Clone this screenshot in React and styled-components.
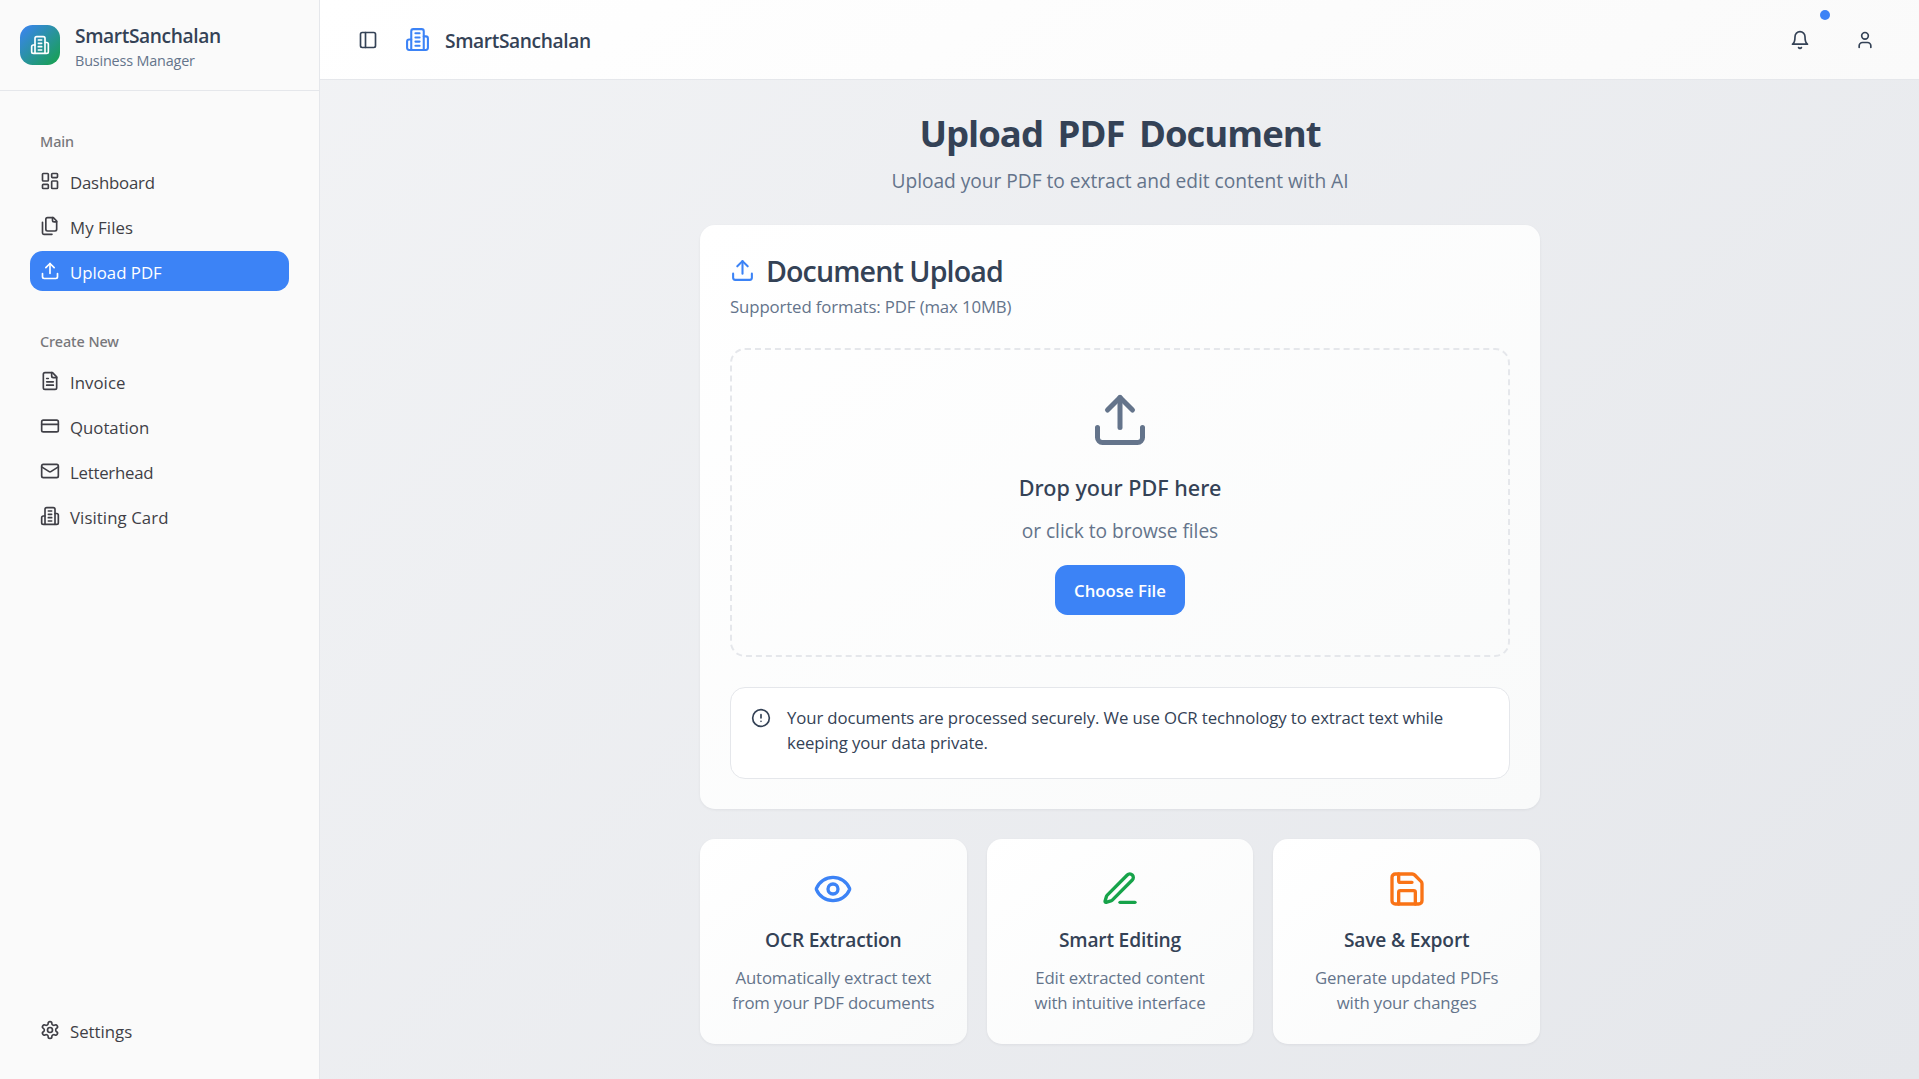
import React from 'react';
import styled, { createGlobalStyle } from 'styled-components';

const GlobalStyle = createGlobalStyle`
  *, *::before, *::after { box-sizing: border-box; }
  body {
    margin: 0;
    font-family: "Open Sans", "Noto Sans", sans-serif;
    color: #344256;
    overflow: hidden;
  }
  h1, h2, h3, p { margin: 0; }
  button { border: 0; padding: 0; background: none; font: inherit; color: inherit; cursor: pointer; }
`;

/* ---------- icons ---------- */

const Svg = styled.svg`
  display: block;
  flex: none;
  width: ${({ $size }) => $size}px;
  height: ${({ $size }) => $size}px;
  color: ${({ $color }) => $color || 'inherit'};
  fill: none;
  stroke: currentColor;
  stroke-width: 2;
  stroke-linecap: round;
  stroke-linejoin: round;
`;

const shapes = {
  building: (
    <>
      <path d="M6 22V4a2 2 0 0 1 2-2h8a2 2 0 0 1 2 2v18Z" />
      <path d="M6 12H4a2 2 0 0 0-2 2v6a2 2 0 0 0 2 2h2" />
      <path d="M18 9h2a2 2 0 0 1 2 2v9a2 2 0 0 1-2 2h-2" />
      <path d="M10 6h4M10 10h4M10 14h4M10 18h4" />
    </>
  ),
  dashboard: (
    <>
      <rect width="7" height="9" x="3" y="3" rx="1" />
      <rect width="7" height="5" x="14" y="3" rx="1" />
      <rect width="7" height="9" x="14" y="12" rx="1" />
      <rect width="7" height="5" x="3" y="16" rx="1" />
    </>
  ),
  files: (
    <>
      <path d="M20 7h-3a2 2 0 0 1-2-2V2" />
      <path d="M9 18a2 2 0 0 1-2-2V4a2 2 0 0 1 2-2h7l4 4v10a2 2 0 0 1-2 2Z" />
      <path d="M3 7.6v12.8A1.6 1.6 0 0 0 4.6 22h9.8" />
    </>
  ),
  upload: (
    <>
      <path d="M21 15v4a2 2 0 0 1-2 2H5a2 2 0 0 1-2-2v-4" />
      <path d="m17 8-5-5-5 5" />
      <path d="M12 3v12" />
    </>
  ),
  fileText: (
    <>
      <path d="M15 2H6a2 2 0 0 0-2 2v16a2 2 0 0 0 2 2h12a2 2 0 0 0 2-2V7Z" />
      <path d="M14 2v4a2 2 0 0 0 2 2h4" />
      <path d="M10 9H8M16 13H8M16 17H8" />
    </>
  ),
  card: (
    <>
      <rect width="20" height="14" x="2" y="5" rx="2" />
      <path d="M2 10h20" />
    </>
  ),
  mail: (
    <>
      <rect width="20" height="16" x="2" y="4" rx="2" />
      <path d="m22 7-8.97 5.7a1.94 1.94 0 0 1-2.06 0L2 7" />
    </>
  ),
  settings: (
    <>
      <path d="M12.22 2h-.44a2 2 0 0 0-2 2v.18a2 2 0 0 1-1 1.73l-.43.25a2 2 0 0 1-2 0l-.15-.08a2 2 0 0 0-2.73.73l-.22.38a2 2 0 0 0 .73 2.73l.15.1a2 2 0 0 1 1 1.72v.51a2 2 0 0 1-1 1.74l-.15.09a2 2 0 0 0-.73 2.73l.22.38a2 2 0 0 0 2.73.73l.15-.08a2 2 0 0 1 2 0l.43.25a2 2 0 0 1 1 1.73V20a2 2 0 0 0 2 2h.44a2 2 0 0 0 2-2v-.18a2 2 0 0 1 1-1.73l.43-.25a2 2 0 0 1 2 0l.15.08a2 2 0 0 0 2.73-.73l.22-.39a2 2 0 0 0-.73-2.73l-.15-.08a2 2 0 0 1-1-1.74v-.5a2 2 0 0 1 1-1.74l.15-.09a2 2 0 0 0 .73-2.73l-.22-.38a2 2 0 0 0-2.73-.73l-.15.08a2 2 0 0 1-2 0l-.43-.25a2 2 0 0 1-1-1.73V4a2 2 0 0 0-2-2z" />
      <circle cx="12" cy="12" r="3" />
    </>
  ),
  panel: (
    <>
      <rect width="18" height="18" x="3" y="3" rx="2" />
      <path d="M9 3v18" />
    </>
  ),
  bell: (
    <>
      <path d="M6 8a6 6 0 0 1 12 0c0 7 3 9 3 9H3s3-2 3-9" />
      <path d="M10.3 21a1.94 1.94 0 0 0 3.4 0" />
    </>
  ),
  user: (
    <>
      <path d="M19 21v-2a4 4 0 0 0-4-4H9a4 4 0 0 0-4 4v2" />
      <circle cx="12" cy="7" r="4" />
    </>
  ),
  alert: (
    <>
      <circle cx="12" cy="12" r="10" />
      <path d="M12 8v4M12 16h.01" />
    </>
  ),
  eye: (
    <>
      <path d="M2.062 12.348a1 1 0 0 1 0-.696 10.75 10.75 0 0 1 19.876 0 1 1 0 0 1 0 .696 10.75 10.75 0 0 1-19.876 0" />
      <circle cx="12" cy="12" r="3" />
    </>
  ),
  pen: (
    <>
      <path d="M12 20h9" />
      <path d="M16.376 3.622a1 1 0 0 1 3.002 3.002L7.368 18.635a2 2 0 0 1-.855.506l-2.872.838a.5.5 0 0 1-.62-.62l.838-2.872a2 2 0 0 1 .506-.854z" />
    </>
  ),
  save: (
    <>
      <path d="M15.2 3a2 2 0 0 1 1.4.6l3.8 3.8a2 2 0 0 1 .6 1.4V19a2 2 0 0 1-2 2H5a2 2 0 0 1-2-2V5a2 2 0 0 1 2-2z" />
      <path d="M17 21v-7a1 1 0 0 0-1-1H8a1 1 0 0 0-1 1v7" />
      <path d="M7 3v4a1 1 0 0 0 1 1h7" />
    </>
  ),
};

const Icon = ({ name, size = 20, color }) => (
  <Svg viewBox="0 0 24 24" $size={size} $color={color} aria-hidden="true">
    {shapes[name]}
  </Svg>
);

/* ---------- shell ---------- */

const Shell = styled.div`
  display: flex;
  height: 1079px;
  background: linear-gradient(135deg, #f3f4f6, #e5e7eb);
`;

const Sidebar = styled.aside`
  display: flex;
  flex-direction: column;
  flex: none;
  width: 320px;
  background: #fafafa;
  border-right: 1px solid #e5e7eb;
`;

const Brand = styled.div`
  display: flex;
  align-items: center;
  gap: 15px;
  height: 91px;
  padding: 0 20px;
  border-bottom: 1px solid #e5e7eb;
`;

const BrandMark = styled.div`
  display: grid;
  place-items: center;
  width: 40px;
  height: 40px;
  border-radius: 12.5px;
  color: #fff;
  background: linear-gradient(135deg, #3c83f6, #16a249);
`;

const BrandText = styled.div`
  padding-top: 2px;
`;

const BrandName = styled.div`
  font-size: 19.2px;
  font-weight: 600;
  line-height: 30px;
  letter-spacing: -0.39px;
`;

const BrandTag = styled.div`
  font-size: 14.4px;
  line-height: 20px;
  letter-spacing: -0.17px;
  color: #64748b;
`;

const Nav = styled.nav`
  display: flex;
  flex-direction: column;
  gap: 30px;
  flex: 1;
  padding: 30px 30px 0;
`;

const NavGroup = styled.div`
  display: flex;
  flex-direction: column;
`;

const NavLabel = styled.div`
  padding: 2px 10px 0;
  font-family: "Noto Sans", sans-serif;
  font-size: 14.4px;
  font-weight: 500;
  line-height: 38px;
  letter-spacing: -0.08px;
  color: #77777b;
`;

const NavList = styled.div`
  display: flex;
  flex-direction: column;
  gap: 5px;
`;

const NavItem = styled.a`
  display: flex;
  align-items: center;
  gap: 10px;
  height: 40px;
  padding: 0 10px;
  border-radius: 12.5px;
  color: ${({ $active }) => ($active ? '#fff' : '#3f3f46')};
  background: ${({ $active }) => ($active ? '#3c83f6' : 'transparent')};
`;

const NavText = styled.span`
  padding-top: 2px;
  font-size: 16.8px;
  line-height: 25px;
  letter-spacing: ${({ $track = 0 }) => $track}px;
`;

const SidebarFooter = styled.div`
  padding: 0 30px 29px;
`;

const Page = styled.div`
  display: flex;
  flex-direction: column;
  flex: 1;
`;

const TopBar = styled.header`
  display: flex;
  align-items: center;
  justify-content: space-between;
  flex: none;
  height: 80px;
  padding: 0 29px 0 30px;
  border-bottom: 1px solid #e5e7eb;
  background: linear-gradient(145deg, #fff, #fafafa);
`;

const TopGroup = styled.div`
  display: flex;
  align-items: center;
  gap: ${({ $gap }) => $gap}px;
`;

const IconButton = styled.button`
  position: relative;
  display: grid;
  place-items: center;
  width: ${({ $width = 50 }) => $width}px;
  height: 50px;
`;

const NotificationDot = styled.span`
  position: absolute;
  top: -5px;
  right: -5px;
  width: 10px;
  height: 10px;
  border-radius: 50%;
  background: #3c83f6;
`;

const TopTitle = styled(BrandName)`
  padding-top: 3px;
  margin-left: -5px;
`;

/* ---------- content ---------- */

const Content = styled.main`
  display: flex;
  flex-direction: column;
  gap: 30px;
  width: 840px;
  margin-left: 380px;
  padding-top: 31px;
`;

const Intro = styled.div`
  display: flex;
  flex-direction: column;
  gap: 10px;
  height: 84px;
  text-align: center;
`;

const PageTitle = styled.h1`
  font-size: 36.5px;
  font-weight: 700;
  line-height: 45px;
  letter-spacing: -1px;
  word-spacing: 6px;
`;

const Lead = styled.p`
  font-size: 19.2px;
  line-height: 30px;
  letter-spacing: -0.04px;
  color: #64748b;
`;

const Surface = styled.section`
  border-radius: 15px;
  background: linear-gradient(145deg, #fff, #f9fafa);
  box-shadow: 0 1px 3px rgba(15, 23, 42, 0.06);
`;

const UploadCard = styled(Surface)`
  height: 584px;
  padding: 30px;
`;

const CardTitle = styled.h2`
  display: flex;
  align-items: center;
  gap: 11px;
  height: 30px;
  font-size: 28.6px;
  font-weight: 600;
  line-height: 30px;
  letter-spacing: -0.9px;
`;

const CardTitleText = styled.span`
  padding-top: 2px;
`;

const CardHint = styled.p`
  margin: 9px 0 29px;
  font-size: 16.8px;
  line-height: 25px;
  letter-spacing: -0.125px;
  color: #64748b;
`;

const DropZone = styled.div`
  display: flex;
  flex-direction: column;
  align-items: center;
  height: 309px;
  padding: 40px;
  border: 2px dashed #e5e7eb;
  border-radius: 15px;
`;

const DropTitle = styled.h3`
  margin: 20px 0 11px;
  font-family: "Noto Sans", sans-serif;
  font-size: 21.6px;
  font-weight: 500;
  line-height: 35px;
`;

const DropHint = styled.p`
  margin-bottom: 19px;
  font-size: 19.2px;
  line-height: 30px;
  letter-spacing: -0.06px;
  color: #64748b;
`;

const PrimaryButton = styled.button`
  width: 130px;
  height: 50px;
  border-radius: 12.5px;
  background: #3c83f6;
  color: #fff;
  font-size: 16.8px;
  font-weight: 600;
`;

const Notice = styled.div`
  display: flex;
  gap: 16px;
  height: 92px;
  margin-top: 30px;
  padding: 17px 19px 15px 20px;
  border: 1px solid #e5e7eb;
  border-radius: 15px;
  background: #fff;
`;

const NoticeIcon = styled.div`
  padding-top: 3px;
`;

const NoticeText = styled.p`
  width: 670px;
  font-size: 16.8px;
  line-height: 25px;
  letter-spacing: -0.125px;
`;

const Features = styled.div`
  display: grid;
  grid-template-columns: repeat(3, 1fr);
  gap: 20px;
`;

const FeatureCard = styled(Surface)`
  display: flex;
  flex-direction: column;
  align-items: center;
  height: 205px;
  padding: 30px;
  text-align: center;
`;

const FeatureTitle = styled.h3`
  margin: 16px 0 10px;
  font-size: 19.2px;
  font-weight: 600;
  line-height: 30px;
  letter-spacing: -0.19px;
`;

const FeatureText = styled.p`
  font-size: 16.8px;
  line-height: 25px;
  letter-spacing: -0.15px;
  color: #64748b;
  white-space: pre-line;
`;

const groups = [
  {
    label: 'Main',
    items: [
      { icon: 'dashboard', text: 'Dashboard', track: -0.2 },
      { icon: 'files', text: 'My Files', track: 0.08 },
      { icon: 'upload', text: 'Upload PDF', active: true },
    ],
  },
  {
    label: 'Create New',
    items: [
      { icon: 'fileText', text: 'Invoice', track: 0.04 },
      { icon: 'card', text: 'Quotation', track: -0.02 },
      { icon: 'mail', text: 'Letterhead', track: -0.24 },
      { icon: 'building', text: 'Visiting Card', track: 0.08 },
    ],
  },
];

const features = [
  { icon: 'eye', color: '#3c83f6', title: 'OCR Extraction', text: 'Automatically extract text\nfrom your PDF documents' },
  { icon: 'pen', color: '#16a34a', title: 'Smart Editing', text: 'Edit extracted content\nwith intuitive interface' },
  { icon: 'save', color: '#f97316', title: 'Save & Export', text: 'Generate updated PDFs\nwith your changes' },
];

const NavLink = ({ icon, text, track, active }) => (
  <NavItem $active={active}>
    <Icon name={icon} />
    <NavText $track={track}>{text}</NavText>
  </NavItem>
);

export default function App() {
  return (
    <>
      <GlobalStyle />
      <Shell>
        <Sidebar>
          <Brand>
            <BrandMark>
              <Icon name="building" />
            </BrandMark>
            <BrandText>
              <BrandName>SmartSanchalan</BrandName>
              <BrandTag>Business Manager</BrandTag>
            </BrandText>
          </Brand>
          <Nav>
            {groups.map((group) => (
              <NavGroup key={group.label}>
                <NavLabel>{group.label}</NavLabel>
                <NavList>
                  {group.items.map((item) => (
                    <NavLink key={item.text} {...item} />
                  ))}
                </NavList>
              </NavGroup>
            ))}
          </Nav>
          <SidebarFooter>
            <NavLink icon="settings" text="Settings" />
          </SidebarFooter>
        </Sidebar>

        <Page>
          <TopBar>
            <TopGroup $gap={20}>
              <IconButton $width={35} aria-label="Toggle sidebar">
                <Icon name="panel" />
              </IconButton>
              <Icon name="building" size={25} color="#3c83f6" />
              <TopTitle>SmartSanchalan</TopTitle>
            </TopGroup>
            <TopGroup $gap={15}>
              <IconButton aria-label="Notifications">
                <Icon name="bell" />
                <NotificationDot />
              </IconButton>
              <IconButton aria-label="Account">
                <Icon name="user" />
              </IconButton>
            </TopGroup>
          </TopBar>

          <Content>
            <Intro>
              <PageTitle>Upload PDF Document</PageTitle>
              <Lead>Upload your PDF to extract and edit content with AI</Lead>
            </Intro>

            <UploadCard>
              <CardTitle>
                <Icon name="upload" size={25} color="#3c83f6" />
                <CardTitleText>Document Upload</CardTitleText>
              </CardTitle>
              <CardHint>Supported formats: PDF (max 10MB)</CardHint>
              <DropZone>
                <Icon name="upload" size={60} color="#64748b" />
                <DropTitle>Drop your PDF here</DropTitle>
                <DropHint>or click to browse files</DropHint>
                <PrimaryButton>Choose File</PrimaryButton>
              </DropZone>
              <Notice>
                <NoticeIcon>
                  <Icon name="alert" />
                </NoticeIcon>
                <NoticeText>
                  Your documents are processed securely. We use OCR technology to extract text while keeping your
                  data private.
                </NoticeText>
              </Notice>
            </UploadCard>

            <Features>
              {features.map(({ icon, color, title, text }) => (
                <FeatureCard key={title}>
                  <Icon name={icon} size={40} color={color} />
                  <FeatureTitle>{title}</FeatureTitle>
                  <FeatureText>{text}</FeatureText>
                </FeatureCard>
              ))}
            </Features>
          </Content>
        </Page>
      </Shell>
    </>
  );
}
